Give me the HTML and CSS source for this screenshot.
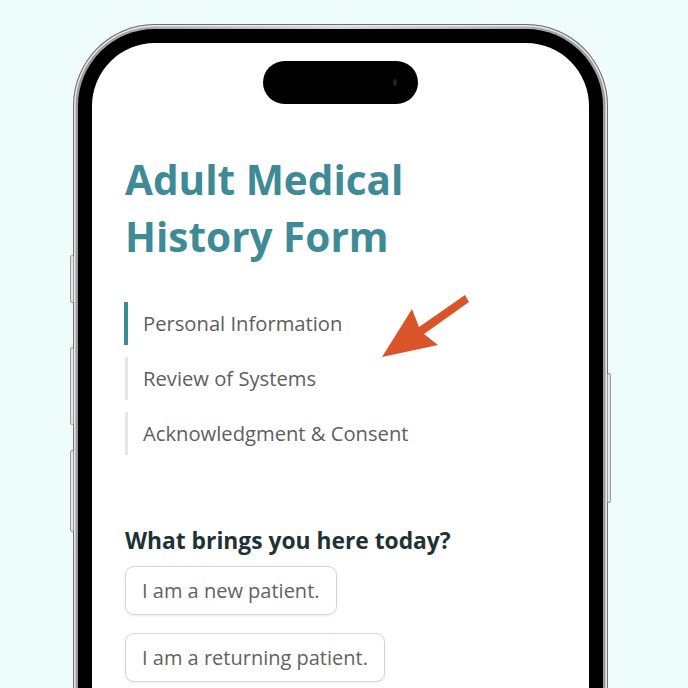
FILE: index.html
```html
<!DOCTYPE html>
<html lang="en">
<head>
<meta charset="utf-8">
<title>Adult Medical History Form</title>
<link rel="stylesheet" href="styles.css">
</head>
<body>
<div class="stage">
  <div class="phone">
    <span class="side-btn side-l1"></span>
    <span class="side-btn side-l2"></span>
    <span class="side-btn side-l3"></span>
    <span class="side-btn side-r1"></span>
    <div class="bezel">
      <div class="screen">
        <div class="island"><span class="cam"></span></div>
        <h1 class="title">Adult Medical<br>History Form</h1>
        <ul class="steps">
          <li class="step step-active">Personal Information</li>
          <li class="step">Review of Systems</li>
          <li class="step">Acknowledgment &amp; Consent</li>
        </ul>
        <h2 class="question">What brings you here today?</h2>
        <div class="options">
          <button class="option" type="button">I am a new patient.</button>
          <button class="option" type="button">I am a returning patient.</button>
        </div>
      </div>
    </div>
  </div>
  <svg class="arrow" width="110" height="80" viewBox="370 285 110 80" xmlns="http://www.w3.org/2000/svg">
    <polygon points="382,357 412,309 419,327 465,295 469,302 424,334 438,345" fill="#d9542a"/>
  </svg>
</div>
</body>
</html>
```
FILE: styles.css
```css
* { box-sizing: border-box; }
html, body {
  margin: 0;
  padding: 0;
  background: #effcfc;
}
.stage {
  position: relative;
  width: 688px;
  height: 688px;
  overflow: hidden;
  padding-top: 24px;
  padding-left: 73px;
  font-family: "Open Sans", "Noto Sans", sans-serif;
}
.phone {
  position: relative;
  width: 535px;
  height: 780px;
  padding: 5px;
  border-radius: 82px;
  background: linear-gradient(90deg, #9a9a9a, #d6d6d6 50%, #9a9a9a);
  box-shadow: inset 0 0 0 1px #6f6f6f, inset 0 0 0 2.5px #e9e9e9;
}
.side-btn {
  position: absolute;
  width: 4px;
  background: #e6e6e6;
  border: 1px solid #9a9a9a;
  border-radius: 2px;
}
.side-l1 { left: -3px; top: 231px; height: 48px; }
.side-l2 { left: -3px; top: 323px; height: 78px; }
.side-l3 { left: -3px; top: 426px; height: 82px; }
.side-r1 { right: -3px; top: 349px; height: 130px; }
.bezel {
  height: 100%;
  padding: 14px;
  border-radius: 77px;
  background: #000;
}
.screen {
  position: relative;
  height: 100%;
  border-radius: 63px;
  background: #fff;
  padding: 108px 33px 0;
  overflow: hidden;
}
.island {
  position: absolute;
  top: 18px;
  left: 171px;
  width: 155px;
  height: 43px;
  border-radius: 22px;
  background: #000;
}
.cam {
  position: absolute;
  left: 130px;
  top: 18px;
  width: 4px;
  height: 7px;
  border-radius: 2px;
  background: #1c2030;
}
.title {
  margin: 0;
  font-size: 40.5px;
  line-height: 57px;
  font-weight: 700;
  color: #3e8a96;
  letter-spacing: 0;
}
.steps {
  list-style: none;
  margin: 37px 0 0;
  padding: 0;
  display: flex;
  flex-direction: column;
  gap: 12px;
}
.step {
  height: 43px;
  line-height: 43px;
  padding-left: 15px;
  border-left: 3px solid #e5e5e5;
  font-size: 20.2px;
  color: #5e5e5e;
}
.step-active {
  border-left: 4px solid #3e8a96;
  padding-left: 15px;
  margin-left: -1px;
}
.question {
  margin: 71px 0 10px;
  font-size: 22.8px;
  line-height: 30px;
  font-weight: 700;
  color: #1e3236;
}
.options {
  display: flex;
  flex-direction: column;
  align-items: flex-start;
  gap: 18px;
}
.option {
  height: 49px;
  padding: 0 16px;
  border: 1px solid #d5d5d5;
  border-radius: 9px;
  background: #fff;
  box-shadow: 0 1px 3px rgba(0, 0, 0, 0.08);
  font-family: "Open Sans", "Noto Sans", sans-serif;
  font-size: 20px;
  color: #626262;
  text-align: left;
}
.arrow {
  position: absolute;
  left: 370px;
  top: 285px;
}
```
